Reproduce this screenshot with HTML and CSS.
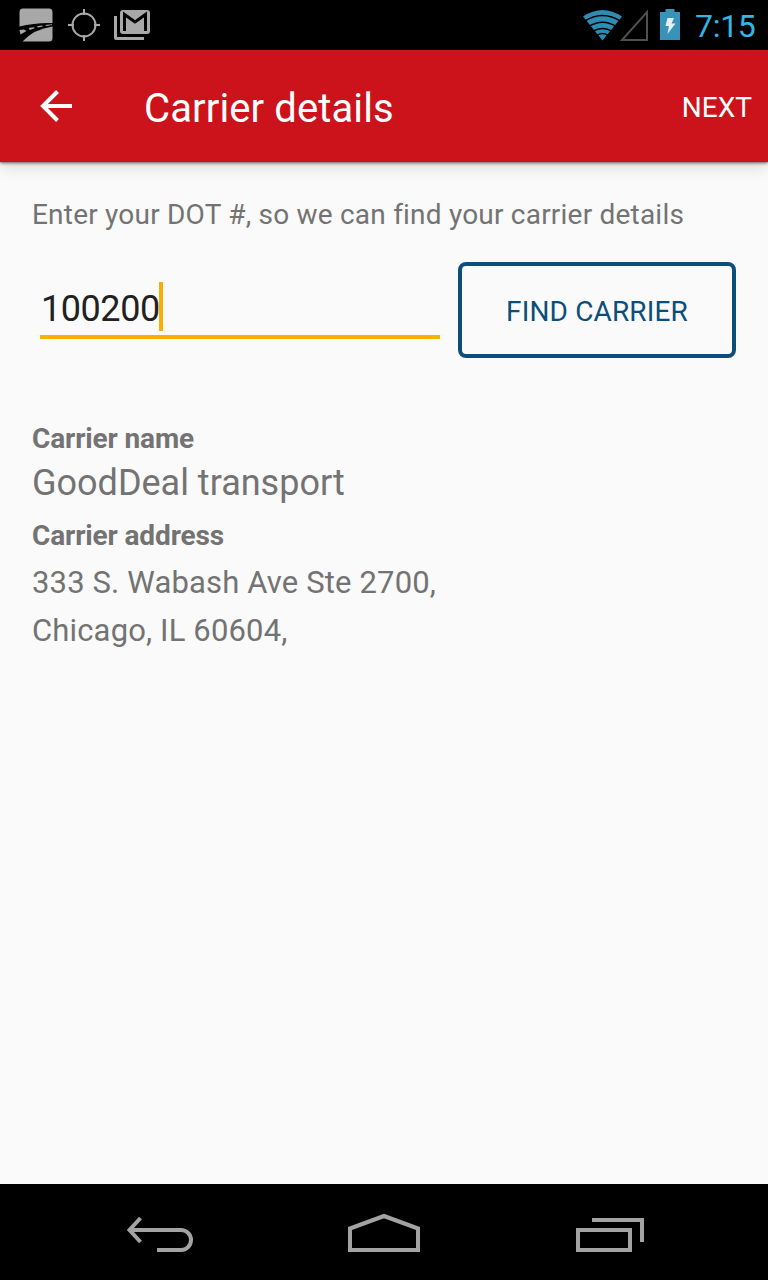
FILE: index.html
```html
<!DOCTYPE html>
<html lang="en">
<head>
  <meta charset="UTF-8">
  <meta name="viewport" content="width=device-width, initial-scale=1.0">
  <title>Carrier details</title>
  <link rel="stylesheet" href="styles.css">
</head>
<body>
<div class="screen">

  <!-- status bar -->
  <div class="status-bar">
    <svg class="status-left" width="170" height="50" viewBox="0 0 170 50">
      <path d="M19.500 26.500V12Q19.500 8.500 23 8.500H49Q52.500 8.500 52.500 12V23Q35 22.500 19.500 26.500Z" fill="#a8a8a8"/>
      <path d="M22.500 41.500Q34 29 52.500 26.500V38Q52.500 41.500 49 41.500Z" fill="#a8a8a8"/>
      <path d="M19.500 30L24 29.500L26.500 31L20.500 34.500ZM28.500 28L33.500 27.200L35 28L30 30ZM37 26.200L42 25.500L43 26.500L38 27.500ZM45 25L52 24.200V25L46.500 26Z" fill="#a8a8a8"/>
      <circle cx="84" cy="25" r="11.500" fill="none" stroke="#a8a8a8" stroke-width="2"/>
      <path d="M84 9V15M84 35V41M68 25H74M94 25H100" stroke="#a8a8a8" stroke-width="2"/>
      <path d="M114 16H117V37H144V40H116Q114 40 114 38Z" fill="#a8a8a8"/>
      <rect x="120" y="10" width="30" height="24" rx="3" fill="#a8a8a8"/>
      <path d="M124.500 31V14.500L135 22L145.500 14.500V31" fill="none" stroke="#000" stroke-width="3"/>
    </svg>
    <div class="status-right">
      <svg width="115" height="50" viewBox="0 0 115 50">
        <path d="M13 16.500Q32.500 3.500 52 16.500L32.500 40.500Z" fill="#2e8bb3"/>
        <path d="M14 21.500Q32.500 9.500 51 21.500M18 27Q32.500 17.500 47 27M22.500 31.500Q32.500 25.500 42.500 31.500M26 36Q32.500 31 39 36" fill="none" stroke="#000" stroke-width="1.600"/>
        <path d="M52 40H77V12Z" fill="none" stroke="#505050" stroke-width="2"/>
        <path d="M90 12H95.500V9H104.500V12H110V40H90Z" fill="#3993b8"/>
        <path d="M97.500 18H104L101.500 23.500H105.500L97.500 34L99 26H95.500Z" fill="#e3f0f5"/>
      </svg>
      <span class="clock">7:15</span>
    </div>
  </div>

  <!-- app bar -->
  <div class="app-bar">
    <svg class="back-icon" width="32" height="32" viewBox="0 0 32 32">
      <path d="M32 16H4M17.500 1.500L3 16L17.500 30.500" fill="none" stroke="#fff" stroke-width="4"/>
    </svg>
    <h1>Carrier details</h1>
    <span class="next">NEXT</span>
  </div>

  <div class="content">
    <p class="hint">Enter your DOT #, so we can find your carrier details</p>
    <div class="search-row">
      <div class="dot-input"><span class="dot-value">100200</span><span class="cursor"></span></div>
      <button class="find-btn">FIND CARRIER</button>
    </div>
    <h2 class="name-label">Carrier name</h2>
    <p class="carrier-name">GoodDeal transport</p>
    <h2 class="address-label">Carrier address</h2>
    <p class="address">333 S. Wabash Ave Ste 2700,<br>Chicago, IL 60604,</p>
  </div>

  <!-- navigation bar -->
  <div class="nav-bar">
    <svg width="100" height="70" viewBox="0 0 100 70">
      <path d="M20 30H71A10 10 0 0 1 71 50H47M30.500 18L19.500 30L30.500 42" fill="none" stroke="#a3a3a3" stroke-width="4"/>
    </svg>
    <svg width="110" height="70" viewBox="0 0 110 70">
      <path d="M20 50V28.500L54 16L88 28.500V50Z" fill="none" stroke="#a3a3a3" stroke-width="4"/>
    </svg>
    <svg width="100" height="70" viewBox="0 0 100 70">
      <path d="M18 30H70V50H18ZM32 20H82V42" fill="none" stroke="#a3a3a3" stroke-width="4"/>
    </svg>
  </div>

</div>
</body>
</html>
```
FILE: styles.css
```css
body {
  margin: 0;
  background-color: #fafafa;
  font-family: Roboto, sans-serif;
  color: #737373;
}
h1, h2, p {
  margin: 0;
}
svg {
  display: block;
  flex-shrink: 0;
}
.screen {
  width: 768px;
  height: 1280px;
  display: flex;
  flex-direction: column;
}
.status-bar {
  height: 50px;
  display: flex;
  justify-content: space-between;
  background-color: #000;
}
.status-right {
  width: 198px;
  display: flex;
}
.clock {
  padding-left: 10px;
  font-size: 32px;
  line-height: 52px;
  letter-spacing: -0.3px;
  color: #33b5e5;
}
.app-bar {
  height: 112px;
  box-sizing: border-box;
  padding: 0 16px 0 40px;
  display: flex;
  align-items: center;
  background-color: #cc131c;
  color: #fff;
  box-shadow: 0 1px 3px rgba(0, 0, 0, 0.6), 0 4px 16px rgba(0, 0, 0, 0.14);
}
.app-bar h1 {
  margin-left: 72px;
  padding-top: 5px;
  font-size: 40px;
  font-weight: 400;
  line-height: 48px;
  letter-spacing: 0.12px;
}
.next {
  margin-left: auto;
  padding-top: 3px;
  font-size: 28px;
}
.content {
  flex: 1;
  padding: 36px 32px 0;
}
.hint {
  font-size: 28px;
  line-height: 33px;
  letter-spacing: 0.21px;
  white-space: nowrap;
}
.search-row {
  margin-top: 31px;
  padding-left: 8px;
  display: flex;
  justify-content: space-between;
}
.dot-input {
  width: 400px;
  height: 77px;
  box-sizing: border-box;
  padding-top: 20px;
  display: flex;
  border-bottom: 4px solid #f9ae00;
}
.dot-value {
  width: 118px;
  padding-left: 1px;
  font-size: 36px;
  line-height: 55px;
  letter-spacing: -0.45px;
  color: #212121;
}
.cursor {
  width: 4px;
  height: 49px;
  background-color: #f9ae00;
}
.find-btn {
  width: 278px;
  height: 96px;
  padding: 2px 0 0;
  border: 4px solid #0c4e7b;
  border-radius: 8px;
  background-color: transparent;
  font-family: Roboto, sans-serif;
  font-size: 28px;
  letter-spacing: 0.15px;
  color: #0c4e7b;
}
.name-label, .address-label {
  font-size: 28px;
  line-height: 32px;
  font-weight: 700;
  letter-spacing: -0.13px;
}
.name-label {
  margin-top: 65px;
}
.carrier-name {
  margin-top: 7px;
  font-size: 36px;
  line-height: 42px;
}
.address-label {
  margin-top: 16px;
}
.address {
  margin-top: 7px;
  font-size: 31px;
  line-height: 48px;
  letter-spacing: 0.15px;
}
.nav-bar {
  height: 80px;
  padding: 16px 108px 0 110px;
  display: flex;
  justify-content: space-between;
  background-color: #000;
}
```
